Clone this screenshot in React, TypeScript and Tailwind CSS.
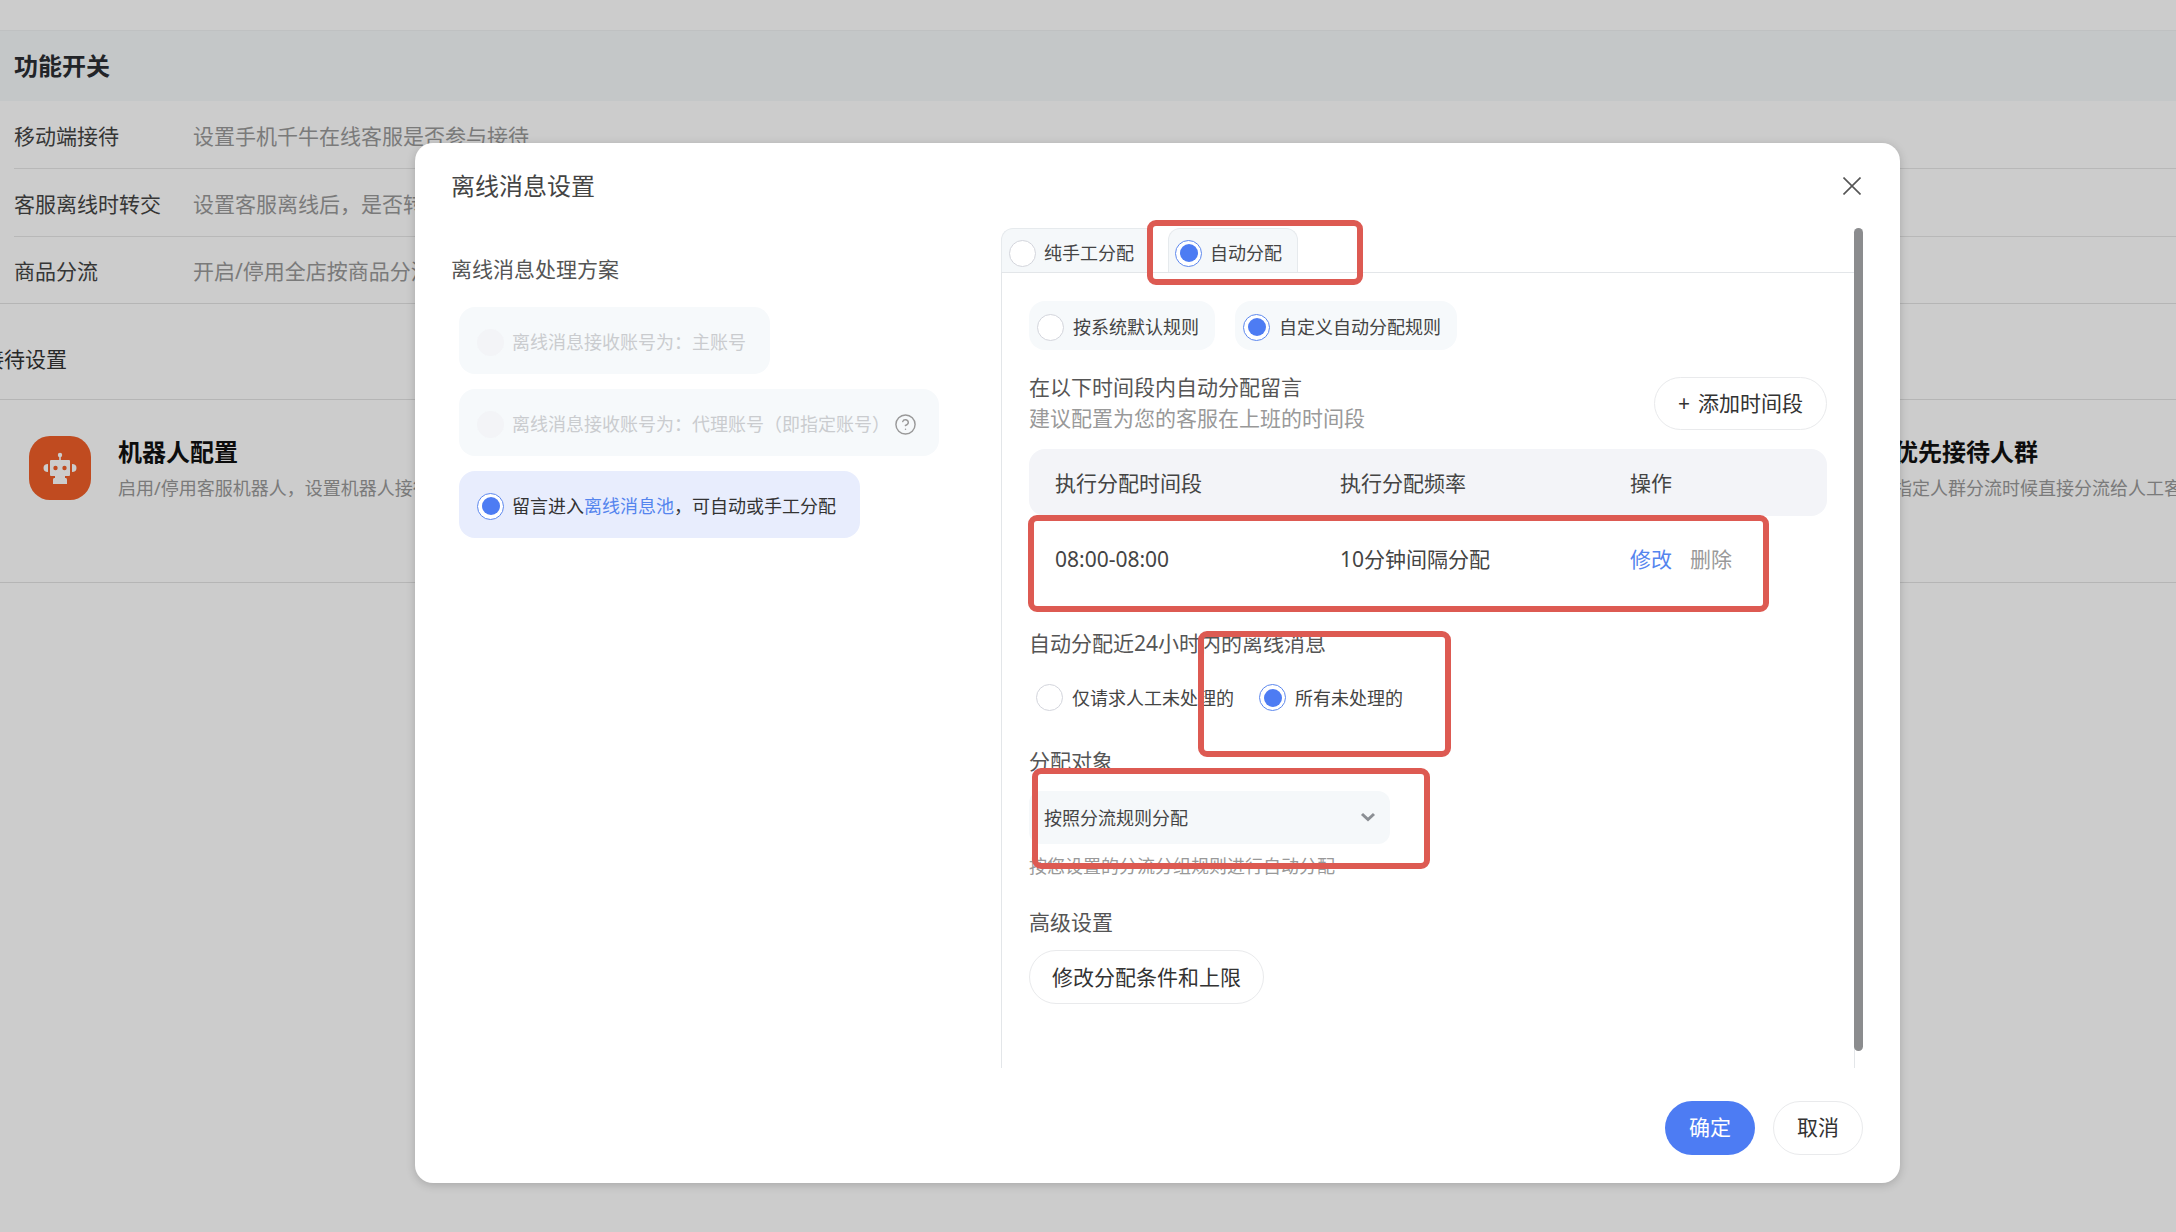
import { useState } from "react";
import type { ReactNode } from "react";
import { CircleHelp } from "lucide-react";

type RadioProps = {
  name: string;
  label: ReactNode;
  className: string;
  checked?: boolean;
  disabled?: boolean;
  onChange?: () => void;
};

const RadioOption = ({
  name,
  label,
  className,
  checked = false,
  disabled = false,
  onChange,
}: RadioProps) => (
  <label className={`flex items-center whitespace-nowrap text-[18px] leading-[26px] ${className}`}>
    <input
      type="radio"
      name={name}
      checked={checked}
      disabled={disabled}
      onChange={onChange}
      className="grid size-[27px] shrink-0 appearance-none place-content-center rounded-full border border-[#d3d5dc] bg-white before:size-[18px] before:rounded-full checked:border-[#5d88ee] checked:before:bg-[#4d7cf3] disabled:border-[#f3f4f7] disabled:bg-[#f3f4f7]"
    />
    <span>{label}</span>
  </label>
);

// red frame laid over the part of the form that needs attention
const Marker = ({ className }: { className: string }) => (
  <div
    className={`pointer-events-none absolute rounded-[9px] border-6 border-[#dd5a52] ${className}`}
  />
);

const SwitchRow = ({ title, desc }: { title: string; desc: string }) => (
  <div className="flex h-[68px] items-center border-b border-[#e6e6e6] pt-0.5 text-[21px] leading-[30px] whitespace-nowrap">
    <span className="w-[179px] shrink-0 text-[#444]">{title}</span>
    <span className="text-[#999]">{desc}</span>
  </div>
);

const RobotIcon = () => (
  <svg viewBox="0 0 62 64" className="h-16 w-[62px] shrink-0" aria-hidden="true">
    <rect width="62" height="64" rx="21" fill="#f05e28" />
    <g fill="#fff">
      <circle cx="31" cy="19" r="2.200" />
      <rect x="30.200" y="19" width="1.600" height="6" />
      <path d="M22 24h18a1 1 0 0 1 1 1v14a1 1 0 0 1-1 1h-4v2h1a2 2 0 0 1 1 2v4H24v-4a2 2 0 0 1 1-2h1v-2h-4a1 1 0 0 1-1-1V25a1 1 0 0 1 1-1z" />
      <path d="M19 28v8c-3 0-4.500-1.500-4.500-4s1.500-4 4.500-4zM43 28v8c3 0 4.500-1.500 4.500-4s-1.500-4-4.500-4z" />
    </g>
    <circle cx="26.500" cy="32" r="2.200" fill="#f05e28" />
    <circle cx="35.500" cy="32" r="2.200" fill="#f05e28" />
  </svg>
);

const BackgroundPage = () => (
  <main className="pt-[30px]">
    <section className="border-b border-[#e3e3e3]">
      <h2 className="border-t border-[#eff2f3] bg-[#f5f9fb] py-5 pl-[14px] text-[24px] leading-[30px] font-bold text-[#2b2e33]">
        功能开关
      </h2>
      <div className="ml-[14px] *:last:h-[66px] *:last:border-b-0">
        <SwitchRow title="移动端接待" desc="设置手机千牛在线客服是否参与接待" />
        <SwitchRow title="客服离线时转交" desc="设置客服离线后，是否转" />
        <SwitchRow title="商品分流" desc="开启/停用全店按商品分流" />
      </div>
    </section>
    <section className="border-b border-[#e3e3e3]">
      <h2 className="-ml-[17px] border-b border-[#e3e3e3] pt-10 pb-[25px] text-[21px] leading-[30px] text-[#333]">
        接待设置
      </h2>
      <div className="flex h-[182px] pt-9 pl-[29px] whitespace-nowrap">
        <div className="flex w-[1776px] shrink-0 gap-[27px]">
          <RobotIcon />
          <div>
            <h3 className="text-[24px] leading-[32px] font-bold text-[#111]">机器人配置</h3>
            <p className="mt-[7px] text-[18px] leading-[26px] text-[#999]">
              启用/停用客服机器人，设置机器人接待
            </p>
          </div>
        </div>
        <div className="pl-[89px]">
          <h3 className="text-[24px] leading-[32px] font-bold text-[#111]">优先接待人群</h3>
          <p className="mt-[7px] text-[18px] leading-[26px] text-[#999]">
            指定人群分流时候直接分流给人工客服
          </p>
        </div>
      </div>
    </section>
  </main>
);

const PlanColumn = () => (
  <section className="w-[550px] shrink-0 pt-[26px]">
    <h3 className="text-[21px] leading-[30px] text-[#555]">离线消息处理方案</h3>
    <div className="mt-[23px] ml-2 flex flex-col items-start gap-[15px]">
      <RadioOption
        name="plan"
        disabled
        label="离线消息接收账号为：主账号"
        className="h-[67px] gap-2 rounded-2xl bg-[#f6f9fb] pt-[3px] pr-6 pl-[18px] text-[#cacccf]"
      />
      <div className="flex h-[67px] items-center gap-1 rounded-2xl bg-[#f6f9fb] pt-[3px] pr-[22px] pl-[18px]">
        <RadioOption
          name="plan"
          disabled
          label="离线消息接收账号为：代理账号（即指定账号）"
          className="gap-2 text-[#cacccf]"
        />
        <CircleHelp size={23} strokeWidth={1.5} className="text-[#999]" />
      </div>
      <RadioOption
        name="plan"
        checked
        onChange={() => {}}
        label={
          <>
            留言进入
            <a href="#pool" className="text-[#5585ee]">
              离线消息池
            </a>
            ，可自动或手工分配
          </>
        }
        className="h-[67px] gap-2 rounded-2xl bg-[#e8edfd] pt-[3px] pr-6 pl-[18px] text-[#333]"
      />
    </div>
  </section>
);

const RulePanel = () => {
  const [mode, setMode] = useState("auto");
  const [rule, setRule] = useState("custom");
  const [scope, setScope] = useState("all");

  return (
    <section className="relative min-w-0 flex-1 text-[21px] leading-[30px] text-[#555]">
      <div className="relative flex h-[45px] items-stretch gap-5 border-b border-[#e3e6e9]">
        <RadioOption
          name="mode"
          label="纯手工分配"
          checked={mode === "manual"}
          onChange={() => setMode("manual")}
          className="gap-2 rounded-tl-xl border-t border-l border-[#e6eaed] bg-[#f5f8fa] pt-[5px] pr-[14px] pl-[7px] text-[#444]"
        />
        <RadioOption
          name="mode"
          label="自动分配"
          checked={mode === "auto"}
          onChange={() => setMode("auto")}
          className="gap-2 rounded-t-xl border-x border-t border-[#e6eaed] bg-[#f5f8fa] pt-[5px] pr-[15px] pl-[6px] text-[#444]"
        />
        <Marker className="-top-2 left-[146px] h-[65px] w-[216px]" />
      </div>

      <div className="border-x border-[#e3e6e9] pt-7 pr-[27px] pb-16 pl-[27px]">
        <div className="flex gap-5">
          <RadioOption
            name="rule"
            label="按系统默认规则"
            checked={rule === "default"}
            onChange={() => setRule("default")}
            className="h-[49px] gap-[9px] rounded-2xl bg-[#f6f9fb] pt-[3px] pr-4 pl-2 text-[#444]"
          />
          <RadioOption
            name="rule"
            label="自定义自动分配规则"
            checked={rule === "custom"}
            onChange={() => setRule("custom")}
            className="h-[49px] gap-[9px] rounded-2xl bg-[#f6f9fb] pt-[3px] pr-4 pl-2 text-[#444]"
          />
        </div>

        <div className="mt-[22px] flex items-center justify-between">
          <div className="leading-[31px]">
            <p>在以下时间段内自动分配留言</p>
            <p className="text-[#999]">建议配置为您的客服在上班的时间段</p>
          </div>
          <button className="flex h-[53px] items-center gap-2 rounded-full border border-[#e9eaec] px-[23px] text-[#333]">
            <span aria-hidden="true">+</span>
            添加时间段
          </button>
        </div>

        <div className="relative">
          <table className="mt-[15px] w-full table-fixed text-left text-[#444]">
            <thead>
              <tr className="h-[67px] bg-[#f3f4f8]">
                <th className="w-[311px] rounded-l-2xl pl-[26px] font-normal">执行分配时间段</th>
                <th className="w-[290px] font-normal">执行分配频率</th>
                <th className="rounded-r-2xl font-normal">操作</th>
              </tr>
            </thead>
            <tbody>
              <tr className="h-[86px]">
                <td className="pl-[26px]">08:00-08:00</td>
                <td>10分钟间隔分配</td>
                <td>
                  <div className="flex gap-[18px]">
                    <button className="text-[#5585ee]">修改</button>
                    <button className="text-[#999]">删除</button>
                  </div>
                </td>
              </tr>
            </tbody>
          </table>
          <Marker className="-bottom-[10px] -left-px h-[97px] w-[741px]" />
        </div>

        <fieldset className="relative mt-[26px]">
          <legend>自动分配近24小时内的离线消息</legend>
          <div className="mt-[26px] ml-[7px] flex gap-[25px]">
            <RadioOption
              name="scope"
              label="仅请求人工未处理的"
              checked={scope === "request"}
              onChange={() => setScope("request")}
              className="gap-[9px] text-[#444]"
            />
            <RadioOption
              name="scope"
              label="所有未处理的"
              checked={scope === "all"}
              onChange={() => setScope("all")}
              className="gap-[9px] text-[#444]"
            />
          </div>
          <Marker className="-top-[27px] left-[169px] h-[126px] w-[253px]" />
        </fieldset>

        <div className="relative mt-[35px]">
          <label htmlFor="target" className="block">
            分配对象
          </label>
          <div className="relative mt-[15px] w-[361px]">
            <select
              id="target"
              className="h-[53px] w-full appearance-none rounded-xl bg-[#f5f8fa] px-[15px] text-[18px] text-[#444]"
            >
              <option>按照分流规则分配</option>
            </select>
            <svg
              viewBox="0 0 16 10"
              className="pointer-events-none absolute top-[21px] right-[14px] h-[10px] w-4"
              aria-hidden="true"
            >
              <path d="M2 2l6 5.500L14 2" fill="none" stroke="#8b8f94" strokeWidth="3" />
            </svg>
          </div>
          <p className="mt-[9px] text-[18px] leading-[26px] text-[#999]">
            按您设置的分流分组规则进行自动分配
          </p>
          <Marker className="top-[22px] left-[3px] h-[101px] w-[398px]" />
        </div>

        <h3 className="mt-7">高级设置</h3>
        <button className="mt-[13px] h-[54px] rounded-full border border-[#e9eaec] px-[22px] text-[#333]">
          修改分配条件和上限
        </button>
      </div>

      <div className="absolute top-0 -right-2 bottom-[17px] w-[9px] rounded-full bg-[#8b8c8e]" />
    </section>
  );
};

const OfflineDialog = () => (
  <div
    role="dialog"
    aria-modal="true"
    aria-label="离线消息设置"
    className="w-full rounded-[18px] bg-white pr-[45px] pb-7 pl-9 shadow-[0_2px_10px_rgba(0,0,0,0.18)]"
  >
    <header className="flex h-[85px] items-center justify-between">
      <h2 className="text-[24px] leading-[32px] text-[#444]">离线消息设置</h2>
      <button aria-label="关闭" className="-mr-2 p-0.5">
        <svg viewBox="0 0 18 18" className="size-[18px]" aria-hidden="true">
          <path d="M.5.5l17 17M17.500.5l-17 17" stroke="#555" strokeWidth="1.600" />
        </svg>
      </button>
    </header>
    <div className="flex">
      <PlanColumn />
      <RulePanel />
    </div>
    <footer className="-mr-2 mt-[33px] flex justify-end gap-[18px] text-[21px]">
      <button className="h-[54px] w-[90px] rounded-full bg-[#4d7cf3] text-white">确定</button>
      <button className="h-[54px] w-[90px] rounded-full border border-[#e9eaec] text-[#333]">
        取消
      </button>
    </footer>
  </div>
);

export default function App() {
  return (
    <div className="relative min-h-screen overflow-hidden bg-white font-['Noto_Sans','Noto_Sans_CJK_SC',sans-serif]">
      <BackgroundPage />
      <div className="absolute inset-0 flex items-start bg-black/20 pt-[143px] pr-[276px] pl-[415px]">
        <OfflineDialog />
      </div>
    </div>
  );
}
